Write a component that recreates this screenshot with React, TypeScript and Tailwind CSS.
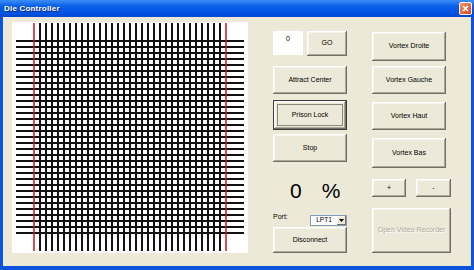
import React from 'react';

const btn =
  'flex items-center justify-center bg-[#ece9d8] text-[7px] text-black shadow-[inset_-1px_-1px_#716f64,inset_1px_1px_#ffffff,inset_-2px_-2px_#aca899,inset_2px_2px_#f5f4ee]';

const Grid = () => {
  const idx = Array.from({ length: 33 }, (_, i) => i);
  return (
    <svg width="236" height="231" viewBox="0 0 236 231">
      {idx.map((i) => (
        <line key={`h${i}`} x1="4" x2="232" y1={19 + i * 6} y2={19 + i * 6} stroke="#111" strokeWidth="2" />
      ))}
      {idx.map((i) => (
        <line
          key={`v${i}`}
          x1={22 + i * 6}
          x2={22 + i * 6}
          y1="1"
          y2="229"
          stroke={i === 0 || i === 32 ? '#c4141c' : '#111'}
          strokeWidth={i === 0 || i === 32 ? 1.5 : 2}
        />
      ))}
    </svg>
  );
};

export default function App() {
  return (
    <div className="w-[474px] h-[270px] flex flex-col bg-[#0a54e0] font-['Liberation_Sans',Arial,sans-serif] overflow-hidden">
      {/* title bar */}
      <div className="h-[17px] shrink-0 flex items-center justify-between px-[4px] bg-[linear-gradient(#3d8ef6,#0c5fe8_35%,#0055e4_70%,#0049d2)]">
        <span className="text-white font-bold text-[8px] tracking-[0.2px] [text-shadow:1px_1px_#0a2a80]">Die Controller</span>
        <div className="w-[13px] h-[13px] -mr-[2px] rounded-[2px] border border-white bg-[linear-gradient(135deg,#f0926c,#d8462a)] flex items-center justify-center">
          <svg width="7" height="7" viewBox="0 0 7 7">
            <path d="M1 1L6 6M6 1L1 6" stroke="white" strokeWidth="1.6" />
          </svg>
        </div>
      </div>

      <div className="flex-1 mx-[3px] mb-[4px] bg-[#ece9d8] flex">
        {/* grid panel */}
        <div className="ml-[9px] mt-[5px] w-[236px] h-[231px] bg-white">
          <Grid />
        </div>

        {/* column 1 */}
        <div className="ml-[25px] w-[74px] flex flex-col">
          <div className="mt-[14px] flex gap-[4px]">
            <div className="w-[30px] h-[24px] bg-white text-[7px] text-center pt-[3px]">0</div>
            <button className={`${btn} w-[40px] h-[25px]`}>GO</button>
          </div>
          <button className={`${btn} mt-[10px] h-[28px]`}>Attract Center</button>
          <button className={`${btn} mt-[6px] h-[30px] border border-[#3c3c3c] p-[3px]`}>
            <span className="w-full h-full flex items-center justify-center border border-[#8a877c]">Prison Lock</span>
          </button>
          <button className={`${btn} mt-[4px] h-[28px]`}>Stop</button>
          <div className="mt-[17px] h-[22px] flex items-center text-[21px] leading-none text-black">
            <span className="ml-[17px]">0</span>
            <span className="ml-[20px]">%</span>
          </div>
          <div className="mt-[12px] h-[14px] flex items-start justify-between">
            <span className="text-[7px] leading-none">Port:</span>
            <div className="mt-[2px] w-[37px] h-[11px] bg-white border border-[#7f9db9] flex items-center">
              <span className="flex-1 text-[6.5px] text-center leading-none">LPT1</span>
              <div className="w-[9px] h-full bg-[#ece9d8] shadow-[inset_-1px_-1px_#716f64,inset_1px_1px_#ffffff] flex items-center justify-center">
                <svg width="5" height="3" viewBox="0 0 5 3">
                  <path d="M0 0H5L2.5 3Z" fill="black" />
                </svg>
              </div>
            </div>
          </div>
          <button className={`${btn} h-[26px]`}>Disconnect</button>
        </div>

        {/* column 2 */}
        <div className="ml-[25px] w-[79px] flex flex-col">
          <button className={`${btn} mt-[15px] w-[74px] h-[29px]`}>Vortex Droite</button>
          <button className={`${btn} mt-[5px] w-[74px] h-[28px]`}>Vortex Gauche</button>
          <button className={`${btn} mt-[8px] w-[74px] h-[28px]`}>Vortex Haut</button>
          <button className={`${btn} mt-[8px] w-[74px] h-[30px]`}>Vortex Bas</button>
          <div className="mt-[11px] flex justify-between">
            <button className={`${btn} w-[34px] h-[18px]`}>+</button>
            <button className={`${btn} w-[35px] h-[18px]`}>-</button>
          </div>
          <button className={`${btn} mt-[11px] h-[45px] !text-[#aca899] [text-shadow:1px_1px_#ffffff]`}>Open Video Recorder</button>
        </div>
      </div>
    </div>
  );
}
